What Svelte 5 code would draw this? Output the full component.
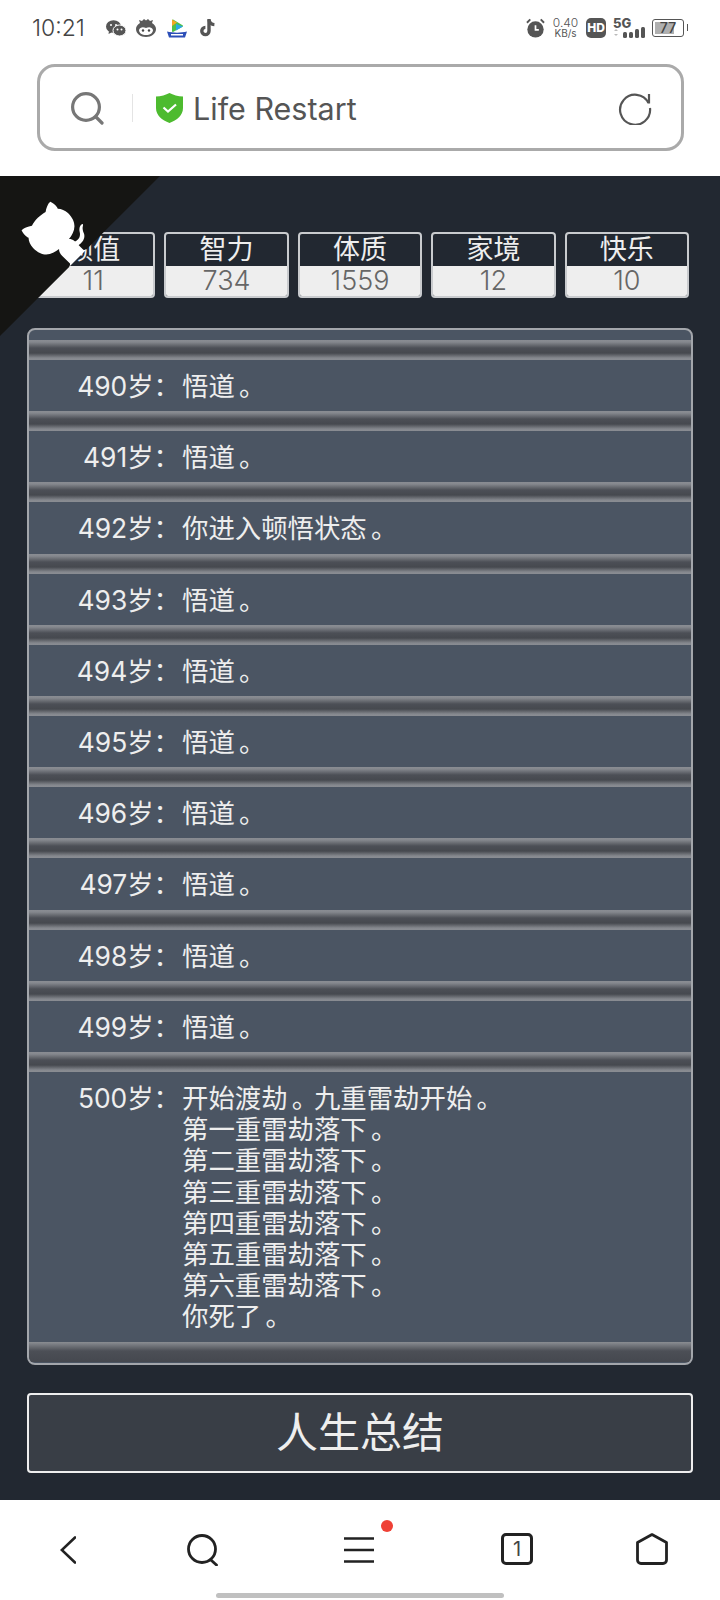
<script lang="ts">
	const stats = [
		{ label: '颜值', value: 11 },
		{ label: '智力', value: 734 },
		{ label: '体质', value: 1559 },
		{ label: '家境', value: 12 },
		{ label: '快乐', value: 10 }
	];

	const wudao = ['悟道。'];
	const rows = [
		{ age: 490, lines: wudao },
		{ age: 491, lines: wudao },
		{ age: 492, lines: ['你进入顿悟状态。'] },
		{ age: 493, lines: wudao },
		{ age: 494, lines: wudao },
		{ age: 495, lines: wudao },
		{ age: 496, lines: wudao },
		{ age: 497, lines: wudao },
		{ age: 498, lines: wudao },
		{ age: 499, lines: wudao },
		{
			age: 500,
			lines: [
				'开始渡劫。九重雷劫开始。',
				'第一重雷劫落下。',
				'第二重雷劫落下。',
				'第三重雷劫落下。',
				'第四重雷劫落下。',
				'第五重雷劫落下。',
				'第六重雷劫落下。',
				'你死了。'
			]
		}
	];

	// the full stop sits further right in the source font
	function pieces(line: string) {
		return line.split(/(。)/).filter(Boolean);
	}
</script>

<div class="page">
	<header class="browser-top">
		<div class="status">
			<span class="time">10:21</span>
			<svg class="ic" width="20" height="17" viewBox="0 0 20 17" fill="#555">
				<ellipse cx="7.500" cy="6.500" rx="7.500" ry="6.300" />
				<path d="M3 11l-.5 3 3-1.500z" />
				<ellipse cx="13.500" cy="10.500" rx="6.500" ry="5.500" stroke="#fff" stroke-width="1" />
				<circle cx="5" cy="5" r="1" fill="#fff" />
				<circle cx="10" cy="5" r="1" fill="#fff" />
				<circle cx="11.500" cy="9.500" r="1" fill="#fff" />
				<circle cx="15.500" cy="9.500" r="1" fill="#fff" />
			</svg>
			<svg class="ic cat" width="20" height="18" viewBox="0 0 20 18">
				<path d="M4 4L3 1l3 1 2-2 2 1.500L12 0l2 2 3-1-1 3c2.500 1.500 4 3.500 4 6 0 4.500-4.500 8-10 8S0 14.500 0 10c0-2.500 1.500-4.500 4-6z" fill="#5a5a5a" />
				<path d="M3 11c1-3 4-3.500 7-2 3-1.500 6-1 7 2 0 3-3 5-7 5s-7-2-7-5z" fill="#fff" />
				<circle cx="7" cy="11.500" r="1.200" fill="#444" />
				<circle cx="13" cy="11.500" r="1.200" fill="#444" />
			</svg>
			<svg class="ic boat" width="22" height="19" viewBox="0 0 22 19">
				<path d="M7 1.500l9 5.500-9 5z" fill="#4fc04a" stroke="#4fc04a" stroke-width="2" stroke-linejoin="round" />
				<path d="M10 5l7 2.500-7 4z" fill="#2aa8e8" />
				<path d="M6 .500l5 3-5 3.500z" fill="#f5a623" />
				<path d="M1 12.500c6 1.500 14 1.500 20 0l-2 6H3z" fill="#2c4fb8" />
				<rect x="5" y="15" width="12" height="1.500" fill="#fff" />
			</svg>
			<svg class="ic note" width="16" height="18" viewBox="0 0 16 18" fill="none" stroke="#555" stroke-width="3.400">
				<path d="M9 0v12a3.600 3.600 0 1 1-3.600-3.600" />
				<path d="M9 1c.5 2.800 2.400 4.400 5.400 4.600" />
			</svg>
			<span class="spacer"></span>
			<svg class="ic alarm" width="19" height="20" viewBox="0 0 20 21">
				<circle cx="10" cy="12" r="8.600" fill="#555" />
				<path d="M10 7.500V12.500h3.500" fill="none" stroke="#fff" stroke-width="1.800" />
				<path d="M1 5l3.500-3.500M19 5l-3.500-3.500" stroke="#555" stroke-width="2" />
			</svg>
			<span class="speed"><b>0.40</b><i>KB/s</i></span>
			<span class="hd">HD</span>
			<span class="net">
				<b>5G</b>
				<svg width="33" height="14" viewBox="0 0 33 14">
					<path d="M3 5l-2 2h4zM3 12l-2-2h4z" fill="#bbb" />
					<g fill="#555">
						<rect x="10" y="8" width="4" height="6" rx="1.500" />
						<rect x="16" y="8" width="4" height="6" rx="1.500" />
						<rect x="22" y="5" width="4" height="9" rx="1.500" />
						<rect x="28" y="3" width="4" height="11" rx="1.500" />
					</g>
				</svg>
			</span>
			<span class="battery"><span class="level"></span><span class="pct">77</span></span>
		</div>

		<div class="address">
			<svg width="34" height="34" viewBox="0 0 34 34" fill="none" stroke="#777" stroke-width="3.200">
				<circle cx="16" cy="16" r="13.400" />
				<path d="M26 26l6 6" stroke-linecap="round" />
			</svg>
			<span class="divider"></span>
			<svg class="shield" width="27" height="30" viewBox="0 0 27 30">
				<path d="M13.500 0C17 2 22 3.300 27 3.500V15c0 7.500-6 12-13.500 15C6 27 0 22.500 0 15V3.500C5 3.300 10 2 13.500 0z" fill="#4dbb2f" />
				<path d="M7.500 14.500l4.500 4 8-7" fill="none" stroke="#fff" stroke-width="2.200" />
			</svg>
			<span class="url">Life Restart</span>
			<svg class="reload" width="34" height="34" viewBox="0 0 34 34" fill="none" stroke="#555" stroke-width="2.200">
				<path d="M30.500 12A15 15 0 1 0 32 17" />
				<path d="M31 3v9.500h-9" stroke-dasharray="9.500 40" />
			</svg>
		</div>
	</header>

	<main class="game">
		<a class="corner" href="#top" aria-label="github">
			<svg width="160" height="160" viewBox="0 0 250 250">
				<path d="M0,0 L115,115 L130,115 L142,142 L250,250 L250,0 Z" fill="#151513" />
				<path d="M128.3,109.0 C113.8,99.7 119.0,89.6 119.0,89.6 C122.0,82.7 120.5,78.6 120.5,78.6 C119.2,72.0 123.4,76.3 123.4,76.3 C127.3,80.9 125.5,87.3 125.5,87.3 C122.9,97.6 130.6,101.9 134.4,103.2" fill="#fff" />
				<path d="M115.0,115.0 C114.9,115.1 118.7,116.5 119.8,115.4 L133.7,101.6 C136.9,99.2 139.9,98.4 142.2,98.6 C133.8,88.0 127.5,74.4 143.8,58.0 C148.5,53.4 154.0,51.2 159.7,51.0 C160.3,49.4 163.2,43.6 171.4,40.1 C171.4,40.1 176.1,42.5 178.8,56.2 C183.1,58.6 187.2,61.8 190.9,65.4 C194.5,69.0 197.7,73.2 200.1,77.6 C213.8,80.2 216.3,84.9 216.3,84.9 C212.7,93.1 206.9,96.0 205.4,96.6 C205.1,102.4 203.0,107.8 198.3,112.5 C181.9,128.9 168.3,122.5 157.7,114.1 C157.9,116.9 156.7,120.9 152.7,124.9 L141.0,136.5 C139.8,137.7 141.6,141.9 141.8,141.8 Z" fill="#fff" />
			</svg>
		</a>

		<ul class="stats">
			{#each stats as s}
				<li>
					<span class="name">{s.label}</span>
					<span class="val">{s.value}</span>
				</li>
			{/each}
		</ul>

		<ul class="trajectory">
			{#each rows as r}
				<li>
					<span class="age">{r.age}岁：</span>
					<span class="text">
						{#each r.lines as line}
							<span class="line">{#each pieces(line) as p}{#if p === '。'}<span class="stop">{p}</span>{:else}{p}{/if}{/each}</span>
						{/each}
					</span>
				</li>
			{/each}
		</ul>

		<button class="summary">人生总结</button>
	</main>

	<nav class="toolbar">
		<svg class="back" width="16" height="28" viewBox="0 0 16 28" fill="none" stroke="#222" stroke-width="2.600" stroke-linecap="round">
			<path d="M15 1.500L1.800 14l13.200 12.500" />
		</svg>
		<svg class="find" width="31" height="32" viewBox="0 0 31 32" fill="none" stroke="#222" stroke-width="2.800" stroke-linecap="round">
			<circle cx="15" cy="15" r="13.500" />
			<path d="M24.500 26.500l5 4.500" />
		</svg>
		<span class="menu">
			<svg width="30" height="26" viewBox="0 0 30 26" fill="none" stroke="#222" stroke-width="2.600">
				<path d="M0 1.500h30M0 13h30M0 24.500h30" />
			</svg>
			<span class="dot"></span>
		</span>
		<span class="tabs">1</span>
		<svg class="home" width="32" height="32" viewBox="0 0 32 32" fill="none" stroke="#222" stroke-width="2.800">
			<path d="M16 1.600L30.500 9.500v17.500a3.500 3.500 0 0 1-3.500 3.500H5A3.500 3.500 0 0 1 1.500 27V9.500z" stroke-linejoin="round" />
		</svg>
	</nav>
	<div class="home-bar"></div>
</div>

<style>
	:global(body) {
		margin: 0;
		background: #fff;
	}

	.page {
		width: 720px;
		height: 1600px;
		overflow: hidden;
		font-family: Inter, "Noto Sans CJK SC", sans-serif;
		display: flex;
		flex-direction: column;
	}

	.browser-top {
		height: 176px;
		box-sizing: border-box;
		padding: 0 33px 0 32px;
	}

	.status {
		height: 64px;
		display: flex;
		align-items: center;
		padding-bottom: 8px;
		box-sizing: border-box;
		color: #555;
	}

	.time {
		font-size: 23px;
		font-weight: 300;
		color: #444;
		width: 74px;
	}

	.ic {
		margin-right: 10px;
		flex-shrink: 0;
	}

	.boat { margin-right: 12px; }
	.alarm { margin-right: 8px; }
	.spacer { flex: 1; }

	.speed {
		display: flex;
		flex-direction: column;
		align-items: center;
		width: 25px;
		margin-right: 8px;
		line-height: 10px;
	}

	.speed b {
		font-size: 12px;
		font-weight: 300;
	}

	.speed i {
		font-size: 10px;
		font-style: normal;
	}

	.hd {
		width: 20px;
		height: 20px;
		border-radius: 5px;
		background: #555;
		color: #fff;
		font-size: 12px;
		font-weight: 800;
		line-height: 20px;
		text-align: center;
		margin-right: 7px;
	}

	.net {
		position: relative;
		width: 33px;
		height: 20px;
		margin-right: 6px;
	}

	.net b {
		position: absolute;
		left: 0;
		top: -2px;
		font-size: 13px;
		line-height: 14px;
		font-weight: 800;
	}

	.net svg {
		position: absolute;
		right: 0;
		bottom: 0;
	}

	.battery {
		position: relative;
		width: 32px;
		height: 18px;
		margin-right: 3px;
		box-sizing: border-box;
		border: 1.500px solid #555;
		border-radius: 3px;
		padding: 2px;
	}

	.battery::after {
		content: "";
		position: absolute;
		right: -5px;
		top: 4px;
		width: 1.500px;
		height: 7px;
		background: #555;
	}

	.level {
		display: block;
		width: 74%;
		height: 100%;
		background: #b0b0b0;
	}

	.pct {
		position: absolute;
		inset: 0;
		font-size: 14px;
		font-weight: 500;
		line-height: 15px;
		text-align: center;
		color: #444;
	}

	.address {
		box-sizing: border-box;
		height: 87px;
		margin: 0 3px 0 5px;
		border: 3px solid #aaa;
		border-radius: 18px;
		display: flex;
		align-items: center;
		padding: 0 29px 0 30px;
	}

	.divider {
		width: 1px;
		height: 28px;
		background: #e4e4e4;
		margin: 0 23px 0 28px;
	}

	.shield {
		margin-right: 10px;
	}

	.url {
		font-size: 30.500px;
		color: #555;
		flex: 1;
		padding-top: 2px;
	}

	.game {
		position: relative;
		height: 1324px;
		box-sizing: border-box;
		padding: 56px 27px 27px;
		background: #222831;
		display: flex;
		flex-direction: column;
	}

	.corner {
		position: absolute;
		left: 0;
		top: 0;
		height: 160px;
		transform: scaleX(-1);
		z-index: 2;
	}

	.stats {
		list-style: none;
		margin: 0 4px 30px;
		padding: 0;
		display: flex;
		gap: 9px;
		height: 66px;
	}

	.stats li {
		flex: 1;
		box-sizing: border-box;
		border: 2px solid #c9cbce;
		border-radius: 4px;
		display: flex;
		flex-direction: column;
		overflow: hidden;
		text-align: center;
		font-size: 27px;
	}

	.name {
		height: 32px;
		line-height: 32px;
		color: #eee;
	}

	.val {
		flex: 1;
		background: #eee;
		color: #666;
		font-weight: 300;
		line-height: 30px;
	}

	.trajectory {
		list-style: none;
		margin: 0 0 28px;
		padding: 10px 0 0;
		height: 1037px;
		box-sizing: border-box;
		overflow: hidden;
		border: 2px solid #a3a6ab;
		border-radius: 8px;
		background: #4b5563;
		color: #eee;
		font-size: 26.400px;
		line-height: 31.200px;
	}

	.trajectory li {
		display: grid;
		grid-template-columns: 153px 1fr;
		padding: 31px 0 9px;
		background: linear-gradient(#8a8d93 0, #85888e 2px, #4c4f56 8px, #46494f 13px, #85888e 18px, #8a8d93 20px, transparent 20px);
	}

	.age {
		text-align: right;
		white-space: nowrap;
		width: 151px;
	}

	.text {
		display: flex;
		flex-direction: column;
	}

	.stop {
		padding-left: 0.16em;
		letter-spacing: -0.16em;
	}

	.trajectory::after {
		content: "";
		display: block;
		height: 20px;
		background: linear-gradient(#8a8d92 0, #4c4f56 9px, #45484f 20px);
	}

	.summary {
		height: 80px;
		border: 2px solid #eee;
		border-radius: 4px;
		background: #393e46;
		color: #eee;
		font-family: inherit;
		font-size: 42px;
		padding: 0 0 8px;
	}

	.toolbar {
		height: 93px;
		display: flex;
		align-items: flex-start;
		padding: 33px 0 0 60px;
		box-sizing: border-box;
	}

	.back { margin-top: 3px; }
	.find { margin: 1px 0 0 111px; }

	.menu {
		position: relative;
		height: 26px;
		margin: 4px 0 0 126px;
	}

	.dot {
		position: absolute;
		right: -19px;
		top: -17px;
		width: 12px;
		height: 12px;
		border-radius: 50%;
		background: #ef4136;
	}

	.tabs {
		width: 32px;
		height: 32px;
		margin-left: 127px;
		box-sizing: border-box;
		border: 3px solid #222;
		border-radius: 5px;
		font-size: 20px;
		line-height: 26px;
		text-align: center;
		color: #444;
	}

	.home { margin-left: 103px; }

	.home-bar {
		width: 288px;
		height: 5px;
		margin: 0 auto;
		border-radius: 3px;
		background: #c0c0c0;
	}
</style>
